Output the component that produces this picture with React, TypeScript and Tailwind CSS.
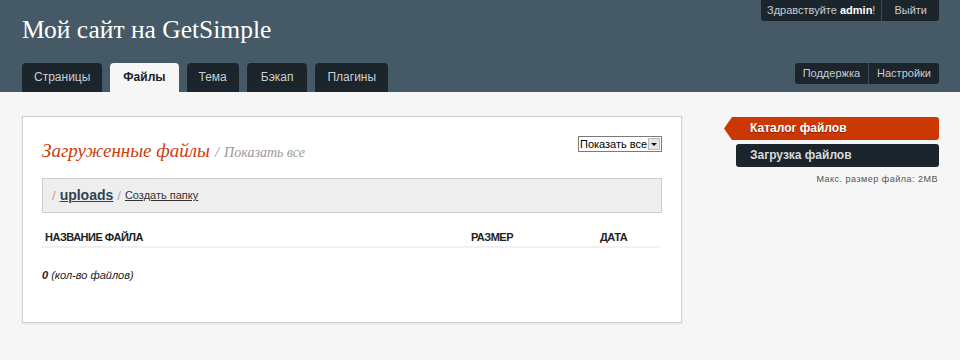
import React from "react";

const tabs: [string, string][] = [
  ["Страницы", "px-[12px]"],
  ["Файлы", "px-[13px]"],
  ["Тема", "px-[12px]"],
  ["Бэкап", "px-[14px]"],
  ["Плагины", "px-[12px]"],
];

export default function App() {
  return (
    <div className="w-[960px] h-[360px] bg-[#f6f6f6] overflow-hidden" style={{ fontFamily: '"Liberation Sans", Arial, sans-serif' }}>
      {/* Header */}
      <div className="h-[92px] bg-[#455a66] px-[22px] flex flex-col justify-between relative">
        <div className="flex justify-between">
          <div className="pt-[14px] text-[25.5px] leading-[32px] text-white" style={{ fontFamily: '"Liberation Serif", Georgia, serif' }}>
            Мой сайт на GetSimple
          </div>
          <div className="flex h-[21px] mr-[-1px] bg-[#1b252b] rounded-b-[3px] text-[11px] text-[#c8cdd0] leading-[21px]">
            <div className="px-[6px] border-r border-[#3a4a52]">Здравствуйте <b className="text-white">admin</b>!</div>
            <div className="px-[12px]">Выйти</div>
          </div>
        </div>
        <div className="flex justify-between items-end">
          <div className="flex gap-[8px]">
            {tabs.map(([t, p]) =>
              t === "Файлы" ? (
                <div key={t} className={`h-[29px] ${p} bg-[#f6f6f6] rounded-t-[4px] text-[12px] font-bold text-[#222] leading-[29px]`}>
                  {t}
                </div>
              ) : (
                <div key={t} className={`h-[29px] ${p} bg-[#1b252b] rounded-t-[4px] text-[12px] text-[#c9cfd2] leading-[29px]`}>
                  {t}
                </div>
              )
            )}
          </div>
          <div className="flex h-[21px] mb-[8px] bg-[#1b252b] rounded-[3px] text-[11px] text-[#c8cdd0] leading-[21px] mr-[-1px]">
            <div className="px-[8px] border-r border-[#3a4a52]">Поддержка</div>
            <div className="px-[8px]">Настройки</div>
          </div>
        </div>
      </div>

      {/* Content */}
      <div className="flex pl-[22px] pt-[24px]">
        <div className="w-[660px] h-[207px] bg-white border border-[#d0d0d0] shadow-[0_1px_2px_rgba(0,0,0,0.08)] px-[19px] pt-[20px]">
          <div className="h-[24px] flex justify-between items-start">
            <div className="flex items-baseline" style={{ fontFamily: '"Liberation Serif", Georgia, serif' }}>
              <span className="text-[19px] italic text-[#cc3d0b]">Загруженные файлы</span>
              <span className="text-[15px] italic text-[#999] ml-[5px]">/</span>
              <span className="text-[14px] italic text-[#999] ml-[5px]">Показать все</span>
            </div>
            <div className="mt-[-1px] h-[16px] w-[84px] border border-[#7a7a7a] bg-white flex items-center text-[11px] text-black leading-none pl-[1px]">
              <span className="flex-1">Показать все</span>
              <span className="w-[12px] h-[12px] mr-[1px] bg-[#e4e4e4] border border-[#bbb] flex items-center justify-center">
                <svg width="6" height="3" viewBox="0 0 6 3"><path d="M0 0h6L3 3z" fill="#111" /></svg>
              </span>
            </div>
          </div>
          <div className="mt-[17px] h-[35px] bg-[#eeeeee] border border-[#cccccc] flex items-center pl-[9px]">
            <span className="text-[13px] text-[#aaa]">/</span>
            <span className="ml-[4px] text-[14px] font-bold text-[#2e4452] underline">uploads</span>
            <span className="ml-[4px] text-[13px] text-[#aaa]">/</span>
            <span className="ml-[4px] text-[11px] text-[#333] underline">Создать папку</span>
          </div>
          <div className="mt-[16px] h-[19px] flex items-start border-b-2 border-[#f1f1f1] text-[11px] font-bold text-[#222] mr-[2px] tracking-[-0.5px]">
            <span className="pl-[3px] w-[429px]">НАЗВАНИЕ ФАЙЛА</span>
            <span className="w-[129px]">РАЗМЕР</span>
            <span>ДАТА</span>
          </div>
          <div className="mt-[19px] text-[11px] italic text-[#222]">
            <b>0</b> (кол-во файлов)
          </div>
        </div>

        {/* Sidebar */}
        <div className="ml-[42px] w-[215px] pt-[1px]">
          <div className="flex h-[23px]">
            <svg width="8" height="23" viewBox="0 0 8 23" className="shrink-0"><path d="M8 0L0 11.5L8 23z" fill="#cc3804" /></svg>
            <div className="flex-1 bg-[#cc3804] rounded-r-[3px] text-[12px] font-bold text-white leading-[23px] pl-[18px]" style={{ textShadow: "0 1px 1px rgba(0,0,0,0.4)" }}>
              Каталог файлов
            </div>
          </div>
          <div className="mt-[4px] ml-[12px] h-[23px] bg-[#1b252b] rounded-[3px] text-[12px] font-bold text-[#d6dadc] leading-[23px] pl-[14px]">
            Загрузка файлов
          </div>
          <div className="mt-[6px] text-right text-[9px] text-[#555] tracking-[0.5px] pr-[1px]">
            Макс. размер файла: 2MB
          </div>
        </div>
      </div>
    </div>
  );
}
